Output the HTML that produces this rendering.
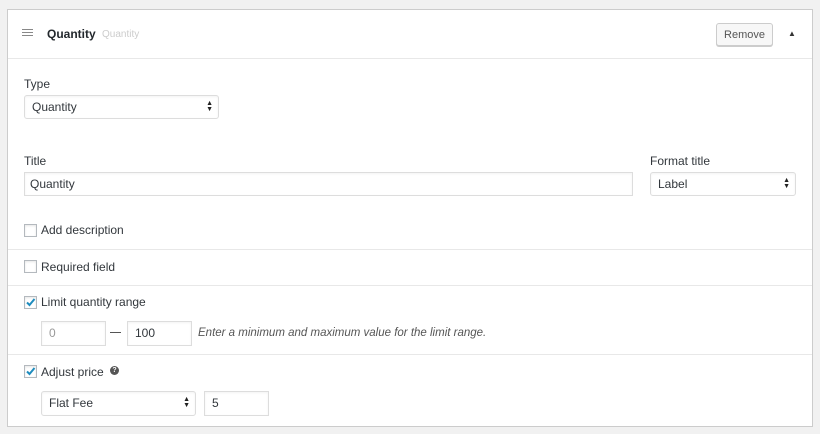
<!DOCTYPE html>
<html><head><style>
*{box-sizing:border-box;margin:0;padding:0}
body{width:820px;height:434px;background:#f1f1f1;font-family:"Liberation Sans",sans-serif;font-size:12px;color:#32373c;position:relative;overflow:hidden}
.p{position:absolute;left:7px;top:9px;width:806px;height:418px;background:#fff;border:1px solid #ccc}
.a{position:absolute}
.hr{position:absolute;left:8px;width:804px;height:1px;background:#e8e8e8}
.in{position:absolute;border:1px solid #ddd;background:#fff;height:24px;line-height:22px;padding-left:7px;font-size:12px;box-shadow:inset 0 1px 2px rgba(0,0,0,.05)}
.sel{border-radius:3px}
.arr{position:absolute;right:5px;top:5px;font-size:7px;line-height:6px;color:#222}
.cb{position:absolute;width:13px;height:13px;border:1px solid #b4b9be;background:#fff;box-shadow:inset 0 1px 2px rgba(0,0,0,.1)}
.lbl{position:absolute;font-size:12px;color:#32373c}
</style></head><body>
<div class="p"></div>
<div class="a" style="left:22px;top:29px;width:11px;height:1px;background:#888;box-shadow:0 3px 0 #888,0 6px 0 #888"></div>
<div class="a" style="left:47px;top:27px;font-weight:bold;font-size:12px;color:#23282d">Quantity</div>
<div class="a" style="left:102px;top:29px;font-size:10px;color:#ccc">Quantity</div>
<div class="a" style="left:716px;top:23px;width:57px;height:23px;border:1px solid #ccc;border-radius:3px;background:#f7f7f7;font-size:11px;line-height:22px;text-align:center;color:#555;box-shadow:0 1px 0 #ccc">Remove</div>
<div class="a" style="left:788px;top:29px;font-size:8px;color:#333">▲</div>
<div class="hr" style="top:58px"></div>
<div class="lbl" style="left:24px;top:77px">Type</div>
<div class="in sel" style="left:24px;top:95px;width:195px">Quantity<div class="arr">▲<br>▼</div></div>
<div class="lbl" style="left:24px;top:154px">Title</div>
<div class="in" style="left:24px;top:172px;width:609px;padding-left:5px">Quantity</div>
<div class="lbl" style="left:650px;top:154px">Format title</div>
<div class="in sel" style="left:650px;top:172px;width:146px">Label<div class="arr">▲<br>▼</div></div>
<div class="cb" style="left:24px;top:224px"></div>
<div class="lbl" style="left:41px;top:223px">Add description</div>
<div class="hr" style="top:249px"></div>
<div class="cb" style="left:24px;top:260px"></div>
<div class="lbl" style="left:41px;top:260px">Required field</div>
<div class="hr" style="top:285px"></div>
<div class="cb" style="left:24px;top:296px"><svg width="11" height="11" style="position:absolute;left:0;top:0"><path d="M2 5.5l2.5 2.5L9.5 2" stroke="#1e8cbe" stroke-width="2" fill="none"/></svg></div>
<div class="lbl" style="left:41px;top:295px">Limit quantity range</div>
<div class="in" style="left:41px;top:321px;width:65px;height:25px;color:#999">0</div>
<div class="a" style="left:110px;top:332px;width:11px;height:1px;background:#555"></div>
<div class="in" style="left:127px;top:321px;width:65px;height:25px">100</div>
<div class="a" style="left:198px;top:327px;font-style:italic;font-size:11.5px;color:#555">Enter a minimum and maximum value for the limit range.</div>
<div class="hr" style="top:354px"></div>
<div class="cb" style="left:24px;top:365px"><svg width="11" height="11" style="position:absolute;left:0;top:0"><path d="M2 5.5l2.5 2.5L9.5 2" stroke="#1e8cbe" stroke-width="2" fill="none"/></svg></div>
<div class="lbl" style="left:41px;top:365px">Adjust price</div>
<div class="a" style="left:110px;top:366px;width:9px;height:9px;border-radius:50%;background:#555;color:#fff;font-size:7px;line-height:9px;text-align:center;font-weight:bold">?</div>
<div class="in sel" style="left:41px;top:391px;width:155px;height:25px">Flat Fee<div class="arr">▲<br>▼</div></div>
<div class="in" style="left:204px;top:391px;width:65px;height:25px">5</div>
</body></html>
